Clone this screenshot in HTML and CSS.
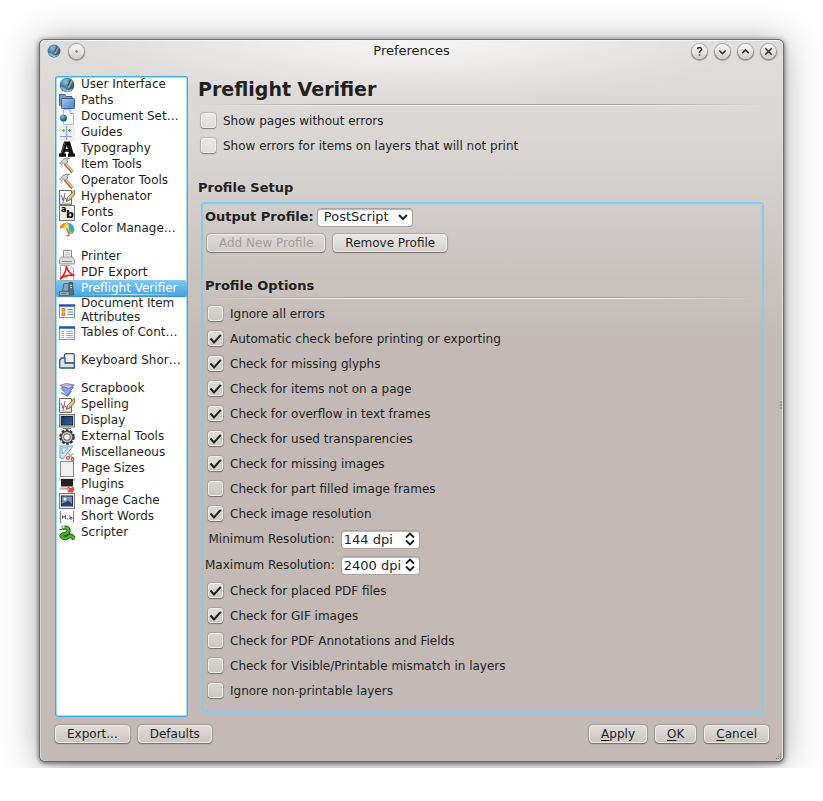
FILE: index.html
```html
<!DOCTYPE html>
<html lang="en">
<head>
<meta charset="utf-8">
<title>Preferences</title>
<link rel="stylesheet" href="styles.css">
</head>
<body>
<svg class="defs" aria-hidden="true">
  <defs>
    <radialGradient id="gBall" cx=".4" cy=".3" r=".7"><stop offset="0" stop-color="#8fc0e0"/><stop offset=".5" stop-color="#3c7fae"/><stop offset="1" stop-color="#1d4f78"/></radialGradient>
    <linearGradient id="gFolder" x1="0" y1="0" x2="1" y2="1"><stop offset="0" stop-color="#a9c8ee"/><stop offset="1" stop-color="#4b82c4"/></linearGradient>
    <linearGradient id="gScreen" x1="0" y1="0" x2="1" y2="1"><stop offset="0" stop-color="#16325f"/><stop offset="1" stop-color="#3a65a5"/></linearGradient>
    <symbol id="ball" viewBox="0 0 16 16"><circle cx="8" cy="8" r="7.3" fill="url(#gBall)"/><path d="M1.500 10Q5 10 7 12T14 11.500Q12 15 8 15T1.500 10Z" fill="#84b6d3"/><path d="M3 5Q6 1.500 10 2.500Q6 4 5 6Z" fill="#7fb1d0"/><path d="M12.500 3 9 9.500 8.500 12 10.500 10.500 13.500 4Z" fill="#d69a4b"/><path d="M11.500 3 8.800 9" stroke="#243747"/></symbol>
    <symbol id="hammer" viewBox="0 0 16 16"><path d="M6 6.500 13.500 15" stroke="#8d5b32" stroke-width="3.400"/><path d="M6.500 6.500 13.800 14.500" stroke="#f0b887" stroke-width="2"/><path d="M.8 6.500 4 2.500Q7 .5 10.500 1.200L8 3 8.800 5.200 6 7.500 4.500 5.800 2.500 8Z" fill="#d3d3d3" stroke="#777" stroke-width=".8"/></symbol>
    <symbol id="pen" viewBox="0 0 16 16"><path d="M.5 1.500H12.500V15.500H.5Z" fill="#fafafa" stroke="#666"/><path d="M2 6 4.500 12M6 4 4 14M3 11Q6 7 7 10T10 11" fill="none" stroke="#7b77bd" stroke-width="1.100"/><path d="M15.500 1 8.500 8.500 7.500 12.500 11.500 10.500 16 5Z" fill="#dcc17d" stroke="#6d5b30" stroke-width=".8"/><path d="M2.500 14.500H12" stroke="#d9c47e" stroke-width="1.500"/></symbol>
  </defs>
</svg>
<div class="desktop">
<main class="window">
  <header class="titlebar">
    <div class="title-side">
      <svg class="app-icon" viewBox="0 0 16 16" aria-hidden="true"><use href="#ball"/></svg>
      <button class="round" aria-label="On all desktops"><svg viewBox="0 0 14 14"><circle cx="7" cy="7" r=".3"/></svg></button>
    </div>
    <h1 class="title">Preferences</h1>
    <div class="title-side title-end">
      <button class="round" aria-label="Help"><svg viewBox="0 0 14 14"><path d="M5.200 4.800Q5.200 3.200 7 3.200T8.900 4.900Q8.900 5.900 7.900 6.500 7 7 7 8.200M7 9.700V11"/></svg></button>
      <button class="round" aria-label="Minimize"><svg viewBox="0 0 14 14"><path d="M4 6 7 9 10 6"/></svg></button>
      <button class="round" aria-label="Maximize"><svg viewBox="0 0 14 14"><path d="M4 8.500 7 5.500 10 8.500"/></svg></button>
      <button class="round" aria-label="Close"><svg viewBox="0 0 14 14"><path d="M4 4 10 10M10 4 4 10"/></svg></button>
    </div>
  </header>

  <div class="content">
    <nav class="sections" aria-label="Sections">
      <ul class="group">
        <li class="item"><svg viewBox="0 0 16 16"><use href="#ball"/></svg><span>User Interface</span></li>
        <li class="item"><svg viewBox="0 0 16 16"><path d="M.5 13V1.500H6L7 3.500H13V6" fill="#8798ad" stroke="#53647b"/><rect x="2.500" y="5.500" width="13" height="10" rx=".8" fill="url(#gFolder)" stroke="#2f63a5"/></svg><span>Paths</span></li>
        <li class="item"><svg viewBox="0 0 16 16"><path d="M4.500.5H11L14.500 4.500V15.500H4.500Z" fill="#f4f7fb" stroke="#b6c0cc"/><path d="M11 .5V4.500H14.500" fill="#dbe7f3" stroke="#9caabd"/><circle cx="4.500" cy="9" r="3.500" fill="url(#gBall)"/></svg><span>Document Set…</span></li>
        <li class="item"><svg viewBox="0 0 16 16"><rect x="1" y="1" width="14" height="14" fill="#f2f2f2" stroke="#e2e2e2"/><path d="M7.500 1V15M1 11.500H13" stroke="#9a96ef" stroke-width="1.200"/><path d="M3 5.500H6M9 5.500H12M4.500 4V7M10.500 4V7" stroke="#41b93c"/></svg><span>Guides</span></li>
        <li class="item"><svg viewBox="0 0 16 16"><path fill-rule="evenodd" d="M5 .5H11L14.500 12.500H16V15.800H9V12.500H10.200L9.500 10.800H6L5.500 12.500H7V15.800H0V12.500H1.500ZM7.700 4.500 6.700 8H8.800Z" fill="#111"/><path d="M6 1.500 2.500 12" stroke="#888" stroke-width=".7"/></svg><span>Typography</span></li>
        <li class="item"><svg viewBox="0 0 16 16"><use href="#hammer"/></svg><span>Item Tools</span></li>
        <li class="item"><svg viewBox="0 0 16 16"><use href="#hammer"/></svg><span>Operator Tools</span></li>
        <li class="item"><svg viewBox="0 0 16 16"><use href="#pen"/></svg><span>Hyphenator</span></li>
        <li class="item"><svg viewBox="0 0 16 16"><rect x=".5" y=".5" width="15" height="15" fill="#ececec" stroke="#777"/><text x="2" y="7" class="glyph-a">a</text><text x="7" y="13" class="glyph-b">b</text></svg><span>Fonts</span></li>
        <li class="item"><svg viewBox="0 0 16 16"><path d="M.5 8Q1 2 8 1.500 5 4 4.500 7.500 3 6.500 .5 8Z" fill="#ef8b23"/><path d="M8 1.500Q4.500 4 4.500 7.500 7 6 9.500 8.500 11 5 8 1.500Z" fill="#ffd735"/><path d="M8 1.500Q14.500 2 15.500 8.500 14 13 12.500 13.500 13 10 9.500 8.500 11 5 8 1.500Z" fill="#36a7db"/><path d="M9.500 8.500Q12.500 9.500 12.500 13.500L9 11.500Z" fill="#79c43c"/><path d="M7.500 7.500 10 13Q10 15.500 7.500 14.500" fill="none" stroke="#e3672a" stroke-width="1.500"/></svg><span>Color Manage…</span></li>
      </ul>
      <ul class="group">
        <li class="item"><svg viewBox="0 0 16 16"><path d="M4.500 8V1.500H12.500V8" fill="#fafafa" stroke="#888"/><path d="M6 4H11M6 6H11" stroke="#b5b5b5"/><path d="M2.500 8H13.500L15.500 10.500V15H.5V10.500Z" fill="#dedede" stroke="#999"/><path d="M3 12.500H13" stroke="#888"/></svg><span>Printer</span></li>
        <li class="item"><svg viewBox="0 0 16 16"><path d="M1.500.5H11L14.500 4V15.500H1.500Z" fill="#f6f6f6" stroke="#aaa"/><path d="M.8 14Q7 9 7.500 1 8.500 8 15.500 10.500 8 9 .8 14Z" fill="none" stroke="#e0252a" stroke-width="1.700"/></svg><span>PDF Export</span></li>
        <li class="item selected" aria-current="page"><svg viewBox="0 0 16 16"><path d="M3.500 10 5 2.500H10V10Z" fill="#8ba4b5" stroke="#5a6c77"/><path d="M10 1.500H13.500L14.500 14H10Z" fill="#5d7380" stroke="#465964"/><path d="M.5 10.500H10V14.500H.5Z" fill="#a2adb1" stroke="#5e6d75"/><path d="M11 4.500H13M11 6.500H13" stroke="#b1ced6"/><path d="M2 12.500H7" stroke="#5a6c77"/></svg><span>Preflight Verifier</span></li>
        <li class="item tall"><svg viewBox="0 0 16 16"><rect x=".5" y="2.500" width="15" height="12" fill="#f9fbff" stroke="#7894cb"/><path d="M0 2.500H16" stroke="#2453bd" stroke-width="2.500"/><path d="M8.500 6.500H14M8.500 9H14M8.500 11.500H14" stroke="#7587a8"/><rect x="3" y="5.500" width="2.500" height="2.500" fill="#f7c15e" stroke="#cf7a1d"/><rect x="3" y="10" width="2.500" height="2.500" fill="#f7c15e" stroke="#cf7a1d"/></svg><span>Document Item Attributes</span></li>
        <li class="item"><svg viewBox="0 0 16 16"><rect x=".5" y="2.500" width="15" height="12" fill="#f9fbff" stroke="#7894cb"/><path d="M0 2.500H16" stroke="#2453bd" stroke-width="2.500"/><path d="M2 6.500H5M7 6.500H14M2 8.500H5M7 8.500H14M2 10.500H5M7 10.500H14M2 12.500H5M7 12.500H14" stroke="#a3b4d1"/></svg><span>Tables of Cont…</span></li>
      </ul>
      <ul class="group">
        <li class="item"><svg viewBox="0 0 16 16"><path d="M5.500 1.500Q6 .7 7 .7H14.500Q15.300.7 15.300 2V10H5Z" fill="#eef0f4" stroke="#3b5f91" stroke-width="1.300"/><path d="M2.500 5H6V10H15.300V15H1.500Q.7 15 .7 14V7Z" fill="#dbe1ea" stroke="#315686" stroke-width="1.300"/></svg><span>Keyboard Shor…</span></li>
      </ul>
      <ul class="group">
        <li class="item"><svg viewBox="0 0 16 16"><path d="M2 7.500 8.500 14 14.500 6 7 4Z" fill="#8fa2f0" stroke="#4457ae" stroke-width=".8"/><path d="M.8 4.500 7 2.500 15.300 4 10 7.500Z" fill="#c9d1fc" stroke="#5863b3" stroke-width=".8"/><path d="M2 11.500 8.500 15 12.500 10" fill="none" stroke="#5970c8" stroke-width="1.200"/><path d="M3 4 13 4.500" stroke="#e2a159" stroke-width="1.200"/></svg><span>Scrapbook</span></li>
        <li class="item"><svg viewBox="0 0 16 16"><use href="#pen"/></svg><span>Spelling</span></li>
        <li class="item"><svg viewBox="0 0 16 16"><rect x=".5" y="1.500" width="15" height="12.500" fill="#d0d0cb" stroke="#777"/><rect x="2.500" y="3.500" width="11" height="8.500" fill="url(#gScreen)" stroke="#16284d"/><path d="M4 15.500H12" stroke="#777"/></svg><span>Display</span></li>
        <li class="item"><svg viewBox="0 0 16 16"><circle cx="8" cy="8" r="6.400" fill="none" stroke="#333" stroke-width="2.800" stroke-dasharray="2.700 1.320"/><circle cx="8" cy="8" r="4.600" fill="none" stroke="#444" stroke-width="3.600"/><circle cx="8" cy="8" r="4.400" fill="none" stroke="#bbb" stroke-width="1.800"/></svg><span>External Tools</span></li>
        <li class="item"><svg viewBox="0 0 16 16"><path d="M1 1H14L4 14 1 13Z" fill="#cfe2f6" stroke="#729dcb"/><path d="M3 3H9L3.500 9Z" fill="#fff" stroke="#86a9cf"/><path d="M8 7 14.500 14M14.500 8.500 8.500 12.500" stroke="#aaa" stroke-width="1.300"/><circle cx="9" cy="13" r="1.500" fill="none" stroke="#d54444" stroke-width="1.200"/><circle cx="13.500" cy="14" r="1.300" fill="none" stroke="#d54444" stroke-width="1.200"/></svg><span>Miscellaneous</span></li>
        <li class="item"><svg viewBox="0 0 16 16"><rect x="1.500" y=".5" width="13" height="15" fill="#f0f0f0" stroke="#8b8b8b"/></svg><span>Page Sizes</span></li>
        <li class="item"><svg viewBox="0 0 16 16"><path d="M0 2.500H16" stroke="#bbb" stroke-width="2"/><rect x="2" y="2" width="12" height="7.500" fill="#222"/><path d="M1 11.500H7" stroke="#aaa" stroke-width="2"/><path d="M7 11.500 9 10 12 11 14 9.500 15.500 12 14 15.500H9.500Z" fill="#e04536"/><circle cx="9" cy="12.500" r="1.200" fill="#f5a69b"/></svg><span>Plugins</span></li>
        <li class="item"><svg viewBox="0 0 16 16"><rect x=".5" y=".5" width="15" height="15" fill="#eee" stroke="#777"/><rect x="2.500" y="3" width="11" height="10" fill="#6f93bd" stroke="#222e44"/><path d="M3 12.500V10.500L7 9 9 7.500 13 11V12.500Z" fill="#273f65"/><circle cx="6" cy="6" r="1.500" fill="#fff6b0"/></svg><span>Image Cache</span></li>
        <li class="item"><svg viewBox="0 0 16 16"><rect x=".5" y="2" width="15" height="12" fill="#f8f8f8"/><path d="M1.500 2V14M14.500 2V14" stroke="#888"/><path d="M3.500 10V6.500L5 8.500 6.500 6.500V10M8 10H9.500M11 6.500V10H13V8.500H11" fill="none" stroke="#555" stroke-width=".9"/></svg><span>Short Words</span></li>
        <li class="item"><svg viewBox="0 0 16 16"><path d="M3 3Q9 1.500 9.500 5T4 9.500Q1 11 4 12.500T10 11.500 15 14.500" fill="none" stroke="#174e16" stroke-width="4.200"/><path d="M3 3Q9 1.500 9.500 5T4 9.500Q1 11 4 12.500T10 11.500 15 14.500" fill="none" stroke="#4fb32b" stroke-width="2.600"/><path d="M.5 4.500H3" stroke="#e02424"/><circle cx="4.500" cy="2" r="1" fill="#fff"/></svg><span>Scripter</span></li>
      </ul>
    </nav>

    <section class="page">
      <h2 class="page-title">Preflight Verifier</h2>
      <div class="rule"></div>
      <div class="checks outer">
        <label class="check"><input type="checkbox">Show pages without errors</label>
        <label class="check"><input type="checkbox">Show errors for items on layers that will not print</label>
      </div>
      <h3 class="heading">Profile Setup</h3>
      <div class="frame">
        <div class="profile-row">
          <label class="strong" for="profile">Output Profile:</label>
          <select id="profile" class="field select"><option>PostScript</option></select>
        </div>
        <div class="profile-buttons">
          <button class="button" disabled>Add New Profile</button>
          <button class="button">Remove Profile</button>
        </div>
        <h3 class="heading">Profile Options</h3>
        <div class="rule"></div>
        <div class="checks">
          <label class="check"><input type="checkbox">Ignore all errors</label>
          <label class="check"><input type="checkbox" checked>Automatic check before printing or exporting</label>
          <label class="check"><input type="checkbox" checked>Check for missing glyphs</label>
          <label class="check"><input type="checkbox" checked>Check for items not on a page</label>
          <label class="check"><input type="checkbox" checked>Check for overflow in text frames</label>
          <label class="check"><input type="checkbox" checked>Check for used transparencies</label>
          <label class="check"><input type="checkbox" checked>Check for missing images</label>
          <label class="check"><input type="checkbox">Check for part filled image frames</label>
          <label class="check"><input type="checkbox" checked>Check image resolution</label>
        </div>
        <div class="resolutions">
          <label for="min">Minimum Resolution:</label><input id="min" class="field spin" type="text" value="144 dpi">
          <label for="max">Maximum Resolution:</label><input id="max" class="field spin" type="text" value="2400 dpi">
        </div>
        <div class="checks">
          <label class="check"><input type="checkbox" checked>Check for placed PDF files</label>
          <label class="check"><input type="checkbox" checked>Check for GIF images</label>
          <label class="check"><input type="checkbox">Check for PDF Annotations and Fields</label>
          <label class="check"><input type="checkbox">Check for Visible/Printable mismatch in layers</label>
          <label class="check"><input type="checkbox">Ignore non-printable layers</label>
        </div>
      </div>
    </section>
  </div>

  <footer class="actions">
    <button class="button">Export...</button>
    <button class="button">Defaults</button>
    <span class="spacer"></span>
    <button class="button"><u>A</u>pply</button>
    <button class="button"><u>O</u>K</button>
    <button class="button"><u>C</u>ancel</button>
  </footer>
  <svg class="grip-side" viewBox="0 0 3 9" aria-hidden="true"><path d="M0 1H2M0 4H2M0 7H2" stroke="#777"/></svg>
  <svg class="grip-corner" viewBox="0 0 7 7" aria-hidden="true"><path d="M5 1H6M3 3H4M5 3.500H6M1 5.500H2M3 5.500H4M5 5.500H6" stroke="#777"/></svg>
</main>
</div>
</body>
</html>
```
FILE: styles.css
```css
* { box-sizing: border-box; }

body {
  margin: 0;
  background: #fff;
  color: #221f1e;
  font: 12px/16px "DejaVu Sans", sans-serif;
}

h1, h2, h3, ul { margin: 0; padding: 0; }
h1, h2, h3 { font-size: 13px; }
button, input, select { margin: 0; color: inherit; font: inherit; }
.defs { position: absolute; width: 0; height: 0; }

.desktop {
  padding: 40px 40px 7px;
  overflow: hidden;
}

.window {
  position: relative;
  border-radius: 5px;
  padding: 0 14px 18px;
  background:
    radial-gradient(ellipse 340px 62px at 50% 0, rgba(255, 255, 255, .75), rgba(255, 255, 255, 0)),
    linear-gradient(#dfdedc, #dad7d4 90px, #d5d1ce 140px, #cbc6c3 220px, #c3bab7 300px);
  box-shadow:
    inset 0 1px #f6f6f6,
    inset -1px 0 #e4e1df,
    inset 1px 0 #d8d5d3,
    0 0 0 1px #6f6f6d,
    0 1px 5px 1px rgba(0, 0, 0, .65),
    0 3px 36px 2px rgba(0, 0, 0, .32);
}

/* Title bar */
.titlebar { display: flex; align-items: center; height: 22px; margin: 0 -7px; }
.title-side { display: flex; flex: 1; align-items: center; gap: 8px; }
.title-end { justify-content: flex-end; }
.title { font-weight: 400; }
.app-icon { width: 14px; height: 14px; }

.round {
  display: flex;
  width: 15px;
  height: 15px;
  padding: 0;
  border: 0;
  border-radius: 50%;
  background: linear-gradient(#fbfbfb, #cfcdcb);
  box-shadow: 0 0 1px 1px rgba(100, 98, 96, .4), 0 1px 1px 1px rgba(0, 0, 0, .25);
}
.round svg { width: 15px; height: 15px; fill: none; stroke: #333; stroke-width: 1.4px; }

/* Main area */
.content { display: flex; gap: 10px; margin-top: 14px; }

.sections {
  display: flex;
  flex: 0 0 133px;
  flex-direction: column;
  gap: 12px;
  margin-left: 1px;
  padding: 0 1px;
  border-radius: 3px;
  background: #fff;
  box-shadow: inset 0 0 0 1px #3daee3, inset 0 0 0 2px #a0dcf6;
}
.group { list-style: none; }
.item {
  display: flex;
  gap: 6px;
  height: 16px;
  padding-left: 3px;
  white-space: nowrap;
}
.item svg { flex: none; position: relative; top: 1px; width: 16px; height: 16px; }
.item.tall { align-items: center; height: 28px; padding-right: 6px; line-height: 14px; white-space: normal; }
.item.selected {
  border-radius: 2px;
  color: #fff;
  background: linear-gradient(#82c8f3, #42a5e2);
  box-shadow: 0 1px #3894cf;
}
.selected span {
  background: linear-gradient(90deg, transparent, #c5e8fb, transparent) 0 14px / 100% 1px no-repeat;
}
.glyph-a { font: bold 8px "DejaVu Sans", sans-serif; }
.glyph-b { font: bold 11px "DejaVu Sans", sans-serif; }

.page { flex: 1; min-width: 0; }
.page-title { font-size: 19px; line-height: 26px; padding-bottom: 2px; }
.rule {
  height: 2px;
  background:
    linear-gradient(90deg, transparent, #a9a5a2 25%, #a9a5a2 75%, transparent) top / 100% 1px no-repeat,
    linear-gradient(90deg, transparent, #f0eeed 25%, #f0eeed 75%, transparent) bottom / 100% 1px no-repeat;
}
.outer { padding: 2px 0 22px; }
.check { display: flex; align-items: center; gap: 7px; height: 25px; }

.check input {
  appearance: none;
  width: 15px;
  height: 15px;
  border: 1px solid #efedeb;
  border-radius: 3px;
  background: linear-gradient(#d9d6d2, #ccc9c3);
  box-shadow: 0 0 1px 1px rgba(90, 80, 75, .22), 0 1px 1px rgba(70, 60, 55, .5);
}
.outer .check input { background: linear-gradient(#eae9e8, #e0dedc); }
.check input:checked {
  background: url("data:image/svg+xml,%3Csvg xmlns='http://www.w3.org/2000/svg' viewBox='0 0 13 13'%3E%3Cpath d='M1.500 6.500 5 10.500 11.800 2.800' fill='none' stroke='%23222' stroke-width='2'/%3E%3C/svg%3E"), linear-gradient(#dfdcd9, #cfccc7);
}

.heading { line-height: 16px; }
.frame {
  margin: 6px 5px 4px 3px;
  padding: 5px 4px 9px 3px;
  border: 1px solid #78d2f8;
  border-radius: 3px;
  box-shadow: inset 0 0 0 1px rgba(120, 205, 240, .65), inset 0 0 3px rgba(120, 205, 240, .5);
}
.profile-row { display: flex; align-items: center; gap: 4px; height: 18px; }
.strong { font-size: 13px; font-weight: 700; }

.field {
  height: 17px;
  border: 0;
  border-radius: 3px;
  outline: 0;
  appearance: none;
  background: #fff no-repeat;
  box-shadow: 0 0 0 1px #aaa5a2, inset 0 1px 1px rgba(0, 0, 0, .3);
  font-size: 13px;
}
.select {
  width: 94px;
  padding: 0 20px 0 6px;
  line-height: 16px;
  background-image: url("data:image/svg+xml,%3Csvg xmlns='http://www.w3.org/2000/svg' width='10' height='8'%3E%3Cpath d='M1 2 5 6 9 2' fill='none' stroke='%23222' stroke-width='2'/%3E%3C/svg%3E");
  background-position: right 4px center;
}
.spin {
  width: 77px;
  padding: 0 0 0 2px;
  background-image: url("data:image/svg+xml,%3Csvg xmlns='http://www.w3.org/2000/svg' width='10' height='14'%3E%3Cpath d='M1 5.500 5 1.500 9 5.500M1 8.500 5 12.500 9 8.500' fill='none' stroke='%23222' stroke-width='1.800'/%3E%3C/svg%3E");
  background-position: right 4px center;
}

.profile-buttons { display: flex; gap: 8px; padding: 8px 2px 26px; }
.button {
  height: 18px;
  padding: 0 11px;
  border: 1px solid #eceae8;
  border-radius: 4px;
  background: linear-gradient(#dfdcda, #cbc8c1);
  box-shadow: 0 0 1px 1px rgba(100, 90, 85, .3), 0 1px 1px rgba(60, 50, 45, .5);
  line-height: 16px;
  white-space: nowrap;
}
.profile-buttons .button { background: linear-gradient(#e9e7e6, #d6d3cf); }
.profile-buttons .button:disabled { color: #a29e9b; background: linear-gradient(#dbd8d6, #d0ccc9); }
.frame .rule { margin-top: 3px; }
.frame .rule + .checks { padding-top: 2px; }
.checks { padding-left: 3px; }

.resolutions {
  display: grid;
  grid-template-columns: max-content max-content;
  grid-auto-rows: 26px;
  align-items: center;
  justify-items: end;
  column-gap: 7px;
}

.actions { display: flex; gap: 8px; margin-top: 8px; padding: 0 0 0 1px; }
.spacer { flex: 1; }
.actions u { text-underline-offset: 2px; }

.grip-side { position: absolute; right: 0; top: 50%; width: 3px; height: 9px; }
.grip-corner { position: absolute; right: 1px; bottom: 1px; width: 7px; height: 7px; }
```
